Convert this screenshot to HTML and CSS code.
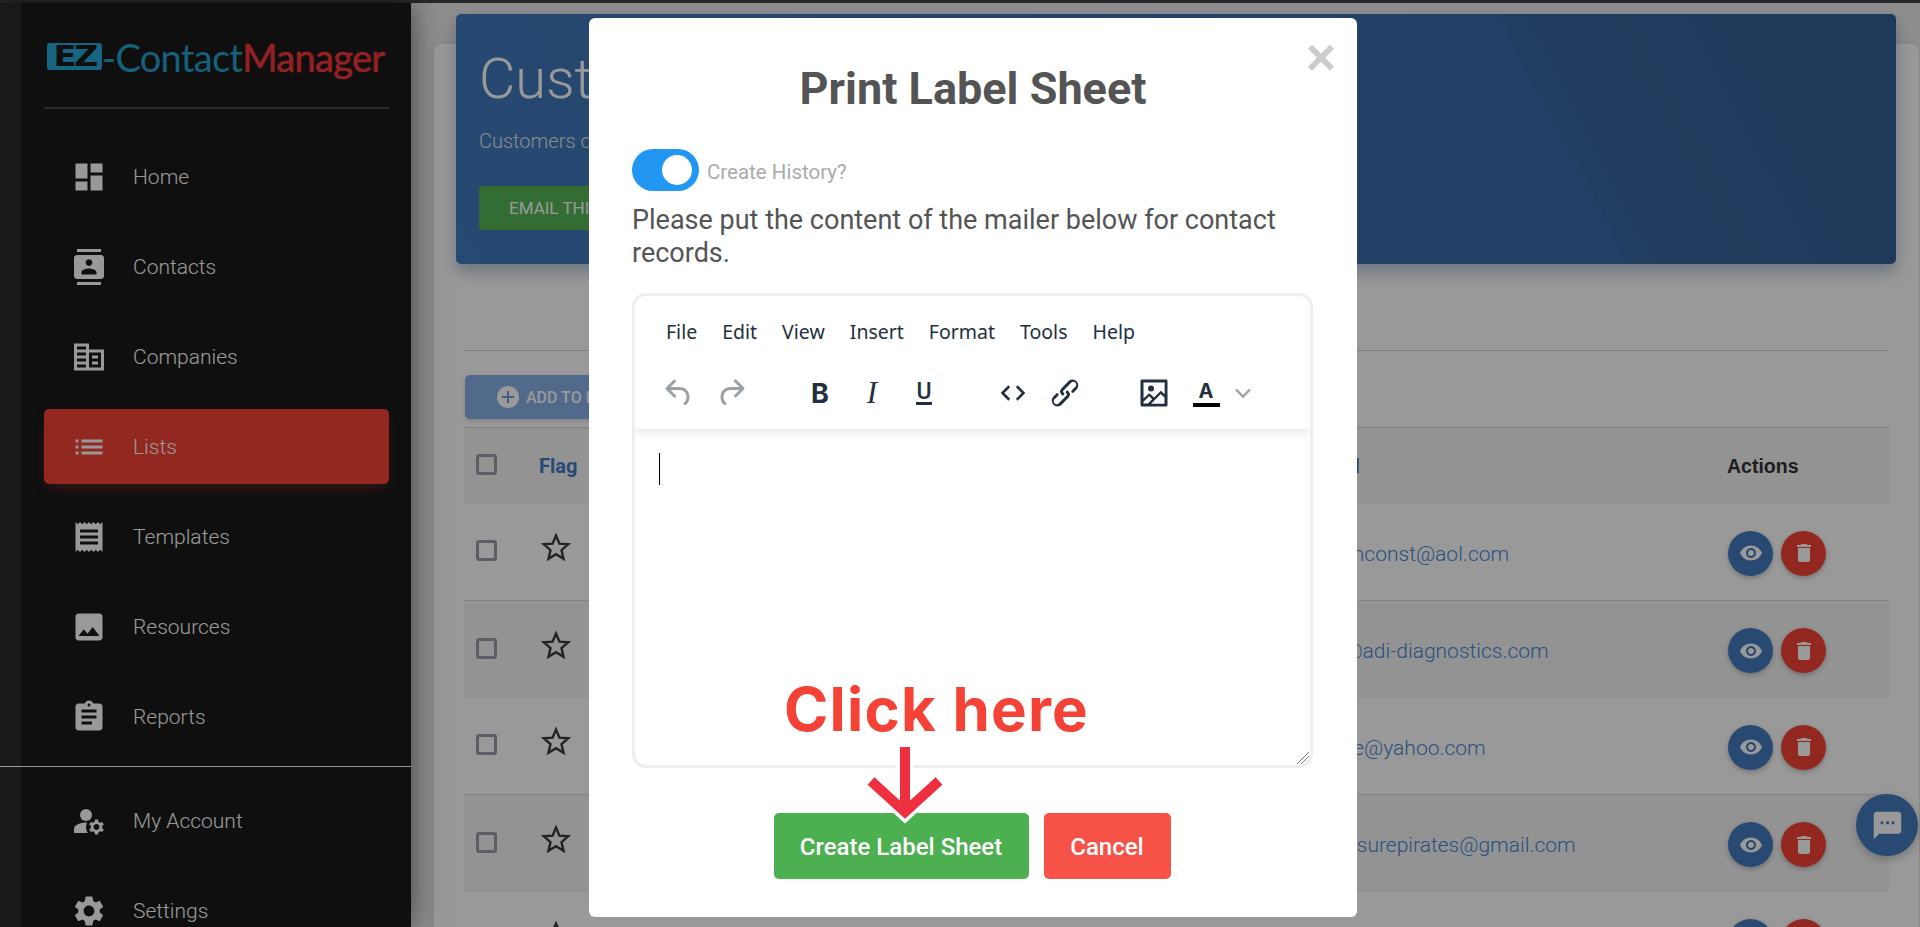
FILE: index.html
```html
<!DOCTYPE html>
<html>
<head>
    <title>EZ-ContactManager</title>
    <link rel="stylesheet" href="styles.css">
</head>
<body>
    <div class="topStrip"></div>
    <div class="layout">
        <aside class="sidebar">
            <div class="logo">
                <span class="logoBox"><span>EZ</span></span><span class="logoContact">-Contact</span><span class="logoManager">Manager</span>
            </div>
            <ul class="nav">
                <li class="navItem"><svg viewBox="0 0 24 24"><path d="M3 13h8V3H3v10zm0 8h8v-6H3v6zm10 0h8V11h-8v10zm0-18v6h8V3h-8z"/></svg>Home</li>
                <li class="navItem"><svg viewBox="0 0 24 24"><path d="M20 0H4v2h16V0zM4 24h16v-2H4v2zM20 4H4c-1.1 0-2 .9-2 2v12c0 1.1.9 2 2 2h16c1.1 0 2-.9 2-2V6c0-1.1-.9-2-2-2zm-8 2.75c1.24 0 2.25 1.01 2.25 2.25s-1.01 2.25-2.25 2.25S9.75 10.24 9.75 9 10.76 6.75 12 6.75zM17 17H7v-1.5c0-1.67 3.33-2.5 5-2.5s5 .83 5 2.5V17z"/></svg>Contacts</li>
                <li class="navItem"><svg viewBox="0 0 24 24"><path d="M12 7V3H2v18h20V7H12zM10 19H4v-2h6v2zm0-4H4v-2h6v2zm0-4H4V9h6v2zm0-4H4V5h6v2zm10 12h-8V9h8v10zm-2-8h-4v2h4v-2zm0 4h-4v2h4v-2z"/></svg>Companies</li>
                <li class="navItem active"><svg viewBox="0 0 24 24"><path d="M3 13h2v-2H3v2zm0 4h2v-2H3v2zm0-8h2V7H3v2zm4 4h14v-2H7v2zm0 4h14v-2H7v2zM7 7v2h14V7H7z"/></svg>Lists</li>
                <li class="navItem"><svg viewBox="0 0 24 24"><path d="M18 17H6v-2h12v2zm0-4H6v-2h12v2zm0-4H6V7h12v2zM3 22l1.5-1.5L6 22l1.5-1.5L9 22l1.5-1.5L12 22l1.5-1.5L15 22l1.5-1.5L18 22l1.5-1.5L21 22V2l-1.5 1.5L18 2l-1.5 1.5L15 2l-1.5 1.5L12 2l-1.5 1.5L9 2 7.5 3.5 6 2 4.5 3.5 3 2v20z"/></svg>Templates</li>
                <li class="navItem"><svg viewBox="0 0 24 24"><path d="M21 19V5c0-1.1-.9-2-2-2H5c-1.1 0-2 .9-2 2v14c0 1.1.9 2 2 2h14c1.1 0 2-.9 2-2zM8.5 13.5l2.5 3.01L14.5 12l4.5 6H5l3.5-4.5z"/></svg>Resources</li>
                <li class="navItem"><svg viewBox="0 0 24 24"><path d="M19 3h-4.18C14.4 1.84 13.3 1 12 1c-1.3 0-2.4.84-2.82 2H5c-1.1 0-2 .9-2 2v14c0 1.1.9 2 2 2h14c1.1 0 2-.9 2-2V5c0-1.1-.9-2-2-2zm-7 0c.55 0 1 .45 1 1s-.45 1-1 1-1-.45-1-1 .45-1 1-1zm2 14H7v-2h7v2zm3-4H7v-2h10v2zm0-4H7V7h10v2z"/></svg>Reports</li>
            </ul>
            <div class="sideLine"></div>
            <ul class="nav navBottom">
                <li class="navItem"><svg viewBox="0 0 24 24"><circle cx="10" cy="8" r="4"/><path d="M10.67 13.02C10.45 13.01 10.23 13 10 13c-2.42 0-4.68.67-6.61 1.82-.88.52-1.39 1.5-1.39 2.53V20h9.26c-.79-1.13-1.26-2.51-1.26-4 0-1.07.25-2.07.67-2.98z"/><path d="M20.75 16c0-.22-.03-.42-.06-.63l1.14-1.01-1-1.73-1.45.49c-.32-.27-.68-.48-1.08-.63L18 11h-2l-.3 1.49c-.4.15-.76.36-1.08.63l-1.45-.49-1 1.73 1.14 1.01c-.03.21-.06.41-.06.63s.03.42.06.63l-1.14 1.01 1 1.73 1.45-.49c.32.27.68.48 1.08.63L16 21h2l.3-1.49c.4-.15.76-.36 1.08-.63l1.45.49 1-1.73-1.14-1.01c.03-.21.06-.41.06-.63zM17 18c-1.1 0-2-.9-2-2s.9-2 2-2 2 .9 2 2-.9 2-2 2z"/></svg>My Account</li>
                <li class="navItem"><svg viewBox="0 0 24 24"><path d="M19.14 12.94c.04-.3.06-.61.06-.94 0-.32-.02-.64-.07-.94l2.03-1.58c.18-.14.23-.41.12-.61l-1.92-3.32c-.12-.22-.37-.29-.59-.22l-2.39.96c-.5-.38-1.03-.7-1.62-.94l-.36-2.54c-.04-.24-.24-.41-.48-.41h-3.84c-.24 0-.43.17-.47.41l-.36 2.54c-.59.24-1.13.57-1.62.94l-2.39-.96c-.22-.08-.47 0-.59.22L2.74 8.87c-.12.21-.08.47.12.61l2.03 1.58c-.05.3-.09.63-.09.94s.02.64.07.94l-2.03 1.58c-.18.14-.23.41-.12.61l1.92 3.32c.12.22.37.29.59.22l2.39-.96c.5.38 1.03.7 1.62.94l.36 2.54c.05.24.24.41.48.41h3.84c.24 0 .44-.17.47-.41l.36-2.54c.59-.24 1.13-.56 1.62-.94l2.39.96c.22.08.47 0 .59-.22l1.92-3.32c.12-.22.07-.47-.12-.61l-2.01-1.58zM12 15.6c-1.98 0-3.6-1.62-3.6-3.6s1.62-3.6 3.6-3.6 3.6 1.62 3.6 3.6-1.62 3.6-3.6 3.6z"/></svg>Settings</li>
            </ul>
        </aside>

        <main class="main">
            <section class="card">
                <div class="hero">
                    <h1>Customers</h1>
                    <p>Customers on this list</p>
                    <div class="emailBtn">EMAIL THIS LIST</div>
                </div>
                <div class="cardBody">
                    <div class="tabs"></div>
                    <div class="addBtn">
                        <svg viewBox="0 0 22 22"><circle cx="11" cy="11" r="11" fill="#fff"/><path d="M10 5h2v5h5v2h-5v5h-2v-5H5v-2h5z" fill="#6d9bd8"/></svg>
                        ADD TO LIST
                    </div>
                    <div class="table">
                        <div class="row head">
                            <span class="check"></span>
                            <span class="flagHead">Flag</span>
                            <span class="emailHead">Email</span>
                            <span class="actionsHead">Actions</span>
                        </div>
                        <div class="row">
                            <span class="check"></span>
                            <svg class="star" viewBox="0 0 32 32"><path d="M16 4.5l3.4 8.1 8.8.7-6.7 5.8 2 8.6L16 23.2l-7.5 4.5 2-8.6-6.7-5.8 8.8-.7z"/></svg>
                            <span class="email">hilenconst@aol.com</span>
                            <div class="actions">
                                <span class="round view"><svg viewBox="0 0 24 24"><path d="M12 4.5C7 4.5 2.73 7.61 1 12c1.73 4.39 6 7.5 11 7.5s9.27-3.11 11-7.5c-1.73-4.39-6-7.5-11-7.5zM12 17c-2.76 0-5-2.24-5-5s2.24-5 5-5 5 2.24 5 5-2.24 5-5 5zm0-8c-1.66 0-3 1.34-3 3s1.34 3 3 3 3-1.34 3-3-1.34-3-3-3z"/></svg></span>
                                <span class="round remove"><svg viewBox="0 0 24 24"><path d="M6 19c0 1.1.9 2 2 2h8c1.1 0 2-.9 2-2V7H6v12zM19 4h-3.5l-1-1h-5l-1 1H5v2h14V4z"/></svg></span>
                            </div>
                        </div>
                        <div class="row">
                            <span class="check"></span>
                            <svg class="star" viewBox="0 0 32 32"><path d="M16 4.5l3.4 8.1 8.8.7-6.7 5.8 2 8.6L16 23.2l-7.5 4.5 2-8.6-6.7-5.8 8.8-.7z"/></svg>
                            <span class="email">so@adi-diagnostics.com</span>
                            <div class="actions">
                                <span class="round view"><svg viewBox="0 0 24 24"><path d="M12 4.5C7 4.5 2.73 7.61 1 12c1.73 4.39 6 7.5 11 7.5s9.27-3.11 11-7.5c-1.73-4.39-6-7.5-11-7.5zM12 17c-2.76 0-5-2.24-5-5s2.24-5 5-5 5 2.24 5 5-2.24 5-5 5zm0-8c-1.66 0-3 1.34-3 3s1.34 3 3 3 3-1.34 3-3-1.34-3-3-3z"/></svg></span>
                                <span class="round remove"><svg viewBox="0 0 24 24"><path d="M6 19c0 1.1.9 2 2 2h8c1.1 0 2-.9 2-2V7H6v12zM19 4h-3.5l-1-1h-5l-1 1H5v2h14V4z"/></svg></span>
                            </div>
                        </div>
                        <div class="row">
                            <span class="check"></span>
                            <svg class="star" viewBox="0 0 32 32"><path d="M16 4.5l3.4 8.1 8.8.7-6.7 5.8 2 8.6L16 23.2l-7.5 4.5 2-8.6-6.7-5.8 8.8-.7z"/></svg>
                            <span class="email">liane@yahoo.com</span>
                            <div class="actions">
                                <span class="round view"><svg viewBox="0 0 24 24"><path d="M12 4.5C7 4.5 2.73 7.61 1 12c1.73 4.39 6 7.5 11 7.5s9.27-3.11 11-7.5c-1.73-4.39-6-7.5-11-7.5zM12 17c-2.76 0-5-2.24-5-5s2.24-5 5-5 5 2.24 5 5-2.24 5-5 5zm0-8c-1.66 0-3 1.34-3 3s1.34 3 3 3 3-1.34 3-3-1.34-3-3-3z"/></svg></span>
                                <span class="round remove"><svg viewBox="0 0 24 24"><path d="M6 19c0 1.1.9 2 2 2h8c1.1 0 2-.9 2-2V7H6v12zM19 4h-3.5l-1-1h-5l-1 1H5v2h14V4z"/></svg></span>
                            </div>
                        </div>
                        <div class="row">
                            <span class="check"></span>
                            <svg class="star" viewBox="0 0 32 32"><path d="M16 4.5l3.4 8.1 8.8.7-6.7 5.8 2 8.6L16 23.2l-7.5 4.5 2-8.6-6.7-5.8 8.8-.7z"/></svg>
                            <span class="email">treasurepirates@gmail.com</span>
                            <div class="actions">
                                <span class="round view"><svg viewBox="0 0 24 24"><path d="M12 4.5C7 4.5 2.73 7.61 1 12c1.73 4.39 6 7.5 11 7.5s9.27-3.11 11-7.5c-1.73-4.39-6-7.5-11-7.5zM12 17c-2.76 0-5-2.24-5-5s2.24-5 5-5 5 2.24 5 5-2.24 5-5 5zm0-8c-1.66 0-3 1.34-3 3s1.34 3 3 3 3-1.34 3-3-1.34-3-3-3z"/></svg></span>
                                <span class="round remove"><svg viewBox="0 0 24 24"><path d="M6 19c0 1.1.9 2 2 2h8c1.1 0 2-.9 2-2V7H6v12zM19 4h-3.5l-1-1h-5l-1 1H5v2h14V4z"/></svg></span>
                            </div>
                        </div>
                        <div class="row">
                            <span class="check"></span>
                            <svg class="star" viewBox="0 0 32 32"><path d="M16 4.5l3.4 8.1 8.8.7-6.7 5.8 2 8.6L16 23.2l-7.5 4.5 2-8.6-6.7-5.8 8.8-.7z"/></svg>
                            <span class="email"></span>
                            <div class="actions">
                                <span class="round view"></span>
                                <span class="round remove"></span>
                            </div>
                        </div>
                    </div>
                </div>
            </section>
        </main>
    </div>

    <div class="chat"><svg viewBox="0 0 24 24"><path d="M20 2H4c-1.1 0-1.99.9-1.99 2L2 22l4-4h14c1.1 0 2-.9 2-2V4c0-1.1-.9-2-2-2zM9 11H7V9h2v2zm4 0h-2V9h2v2zm4 0h-2V9h2v2z"/></svg></div>

    <div class="overlay">
        <div class="modal">
            <span class="close">×</span>
            <h2>Print Label Sheet</h2>
            <div class="historyRow">
                <span class="toggle"><span class="knob"></span></span>
                <span class="historyLabel">Create History?</span>
            </div>
            <p class="intro">Please put the content of the mailer below for contact records.</p>

            <div class="editor">
                <div class="editorHead">
                    <div class="menubar">
                        <span>File</span><span>Edit</span><span>View</span><span>Insert</span><span>Format</span><span>Tools</span><span>Help</span>
                    </div>
                    <div class="toolbar">
                        <div class="toolGroup">
                            <span class="tool off"><svg viewBox="0 0 24 24"><path d="M6.4 8H12c3.7 0 6.2 2 6.8 5.1.6 2.7-.4 5.6-2.3 6.8a1 1 0 0 1-1-1.8c1.1-.6 1.8-2.7 1.4-4.6-.5-2.1-2.1-3.5-4.9-3.5H6.4l3.3 3.3a1 1 0 1 1-1.4 1.4l-5-5a1 1 0 0 1 0-1.4l5-5a1 1 0 0 1 1.4 1.4L6.4 8z"/></svg></span>
                            <span class="tool off"><svg viewBox="0 0 24 24"><path d="M17.6 10H12c-2.8 0-4.4 1.4-4.9 3.5-.4 2 .3 4 1.4 4.6a1 1 0 1 1-1 1.8c-1.9-1.2-2.9-4.1-2.3-6.8.6-3 3-5.1 6.8-5.1h5.6l-3.3-3.3a1 1 0 1 1 1.4-1.4l5 5a1 1 0 0 1 0 1.4l-5 5a1 1 0 0 1-1.4-1.4l3.3-3.3z"/></svg></span>
                        </div>
                        <div class="toolGroup">
                            <span class="tool boldTool">B</span>
                            <span class="tool italicTool">I</span>
                            <span class="tool underTool"><span>U</span></span>
                        </div>
                        <div class="toolGroup">
                            <span class="tool"><svg viewBox="0 0 24 24"><path d="M9.5 7.5L5 12l4.5 4.5M14.5 7.5L19 12l-4.5 4.5" fill="none" stroke="currentColor" stroke-width="1.7"/></svg></span>
                            <span class="tool"><svg viewBox="0 0 24 24"><path d="M6.2 12.3a1 1 0 0 1 1.4 1.4l-2 2a2 2 0 1 0 2.6 2.8l4.8-4.8a1 1 0 0 0 0-1.4 1 1 0 1 1 1.4-1.3 2.9 2.9 0 0 1 0 4L9.6 20a3.9 3.9 0 0 1-5.5-5.5l2-2zm11.6-.6a1 1 0 0 1-1.4-1.4l2-2a2 2 0 1 0-2.6-2.8L11 10.3a1 1 0 0 0 0 1.4A1 1 0 1 1 9.6 13a2.9 2.9 0 0 1 0-4L14.4 4a3.9 3.9 0 0 1 5.5 5.5l-2 2z"/></svg></span>
                        </div>
                        <div class="toolGroup">
                            <span class="tool"><svg viewBox="0 0 24 24"><path d="M5 15.7l3.3-3.2c.3-.3.7-.3 1 0L12 15l4.1-4c.3-.4.8-.4 1 0l2 1.9V5H5v10.7zM5 18V19h3l2.8-2.9-2-2L5 17.9zm14-3l-2.5-2.4-6.4 6.5H19v-4zM4 3h16c.6 0 1 .4 1 1v16c0 .6-.4 1-1 1H4a1 1 0 0 1-1-1V4c0-.6.4-1 1-1zm6 8a2 2 0 1 0 0-4 2 2 0 0 0 0 4z"/></svg></span>
                            <span class="tool colorTool"><span>A</span></span>
                            <span class="tool chevron"><svg viewBox="0 0 24 24"><path d="M6 9l6 6 6-6" fill="none" stroke="currentColor" stroke-width="2"/></svg></span>
                        </div>
                    </div>
                </div>
                <div class="editorBody">
                    <div class="caret"></div>
                    <svg class="grip" viewBox="0 0 16 16"><path d="M15 3L3 15M15 7L7 15M15 11L11 15" stroke="#777" fill="none"/></svg>
                </div>
            </div>

            <div class="modalBtns">
                <div class="btn create">Create Label Sheet</div>
                <div class="btn cancel">Cancel</div>
            </div>

            <div class="hint">Click here</div>
            <svg class="hintArrow" viewBox="0 0 90 90">
                <path d="M45 1V62M11 35L45 66L79 35" fill="none" stroke="#fff" stroke-width="17"/>
                <path d="M45 1V62M11 35L45 66L79 35" fill="none" stroke="#ee2f3f" stroke-width="10"/>
            </svg>
        </div>
    </div>
</body>
</html>
```

FILE: styles.css
```css
*{
    box-sizing: border-box;
}
html,body{
    height: 100%;
}
body{
    margin: 0;
    overflow: hidden;
    background-color: #ececec;
    font-family: Roboto, "Liberation Sans", sans-serif;
}
ul{
    list-style: none;
    margin: 0;
    padding: 0;
}
.topStrip{
    height: 3px;
    background-color: #41414a;
}
.layout{
    display: flex;
    height: 924px;
}
/*=======Sidebar=======*/
.sidebar{
    position: relative;
    z-index: 1;
    flex: none;
    width: 411px;
    padding-left: 21px;
    background: linear-gradient(90deg, #2b2b2b 21px, #191919 21px);
    box-shadow: 0 0 28px rgba(0,0,0,.55);
    overflow: hidden;
}
.logo{
    display: flex;
    align-items: center;
    height: 106px;
    margin: 0 22px 0 23px;
    padding: 3px 0 0 3px;
    border-bottom: 2px solid #4a4a50;
    font-family: Lato, sans-serif;
    font-size: 38px;
    letter-spacing: -.7px;
    white-space: nowrap;
}
.logoBox{
    display: block;
    flex: none;
    width: 55px;
    height: 27px;
    border-radius: 3px;
    background-color: #27a9d8;
    color: #191919;
    font-family: "DejaVu Sans", sans-serif;
    font-size: 28px;
    font-weight: 700;
    line-height: 27px;
    letter-spacing: -2px;
    text-align: center;
}
.logoBox span{
    display: inline-block;
    transform: scaleX(1.2);
}
.logoContact{
    color: #22a2cf;
}
.logoManager{
    color: #f4373d;
    -webkit-text-stroke: .6px #f4373d;
}
.nav{
    display: flex;
    flex-direction: column;
    gap: 15px;
    margin: 0 22px 0 23px;
    padding-top: 30px;
}
.navItem{
    display: flex;
    align-items: center;
    gap: 26px;
    height: 75px;
    padding-left: 27px;
    border-radius: 5px;
    color: #fff;
    font-size: 21px;
    font-weight: 300;
}
.navItem svg{
    width: 36px;
    height: 36px;
    fill: #fff;
    flex: none;
}
.navItem.active{
    background-color: #f44336;
    box-shadow: 0 6px 14px -4px rgba(244,67,54,.4);
}
.sideLine{
    height: 1px;
    margin: 12px 0 0 -21px;
    background-color: #fff;
}
.navBottom{
    padding-top: 16px;
}
/*=======Main=======*/
.main{
    flex: 1;
    min-width: 0;
    padding: 41px 1px 0 23px;
}
.card{
    height: 900px;
    border-radius: 8px;
    background-color: #fff;
    box-shadow: 0 1px 12px rgba(0,0,0,.08);
}
.hero{
    height: 250px;
    margin: 0 23px 0 22px;
    position: relative;
    top: -30px;
    padding: 33px 23px;
    border-radius: 5px;
    background: linear-gradient(62.5deg, #417bbe, #3b6dac 65%, #3a6aa8 74.7%, #38669f 74.7%, #35629a 88.4%, #336096 88.4%);
    box-shadow: 0 8px 16px rgba(40,80,130,.35);
    color: #fff;
}
.hero h1{
    margin: 0;
    font-size: 56px;
    font-weight: 300;
    line-height: 64px;
}
.hero p{
    margin: 18px 0 0;
    font-size: 20px;
    font-weight: 300;
    color: #e2e8ef;
}
.emailBtn{
    display: inline-block;
    margin-top: 33px;
    padding: 0 30px;
    height: 44px;
    line-height: 44px;
    border-radius: 4px;
    background-color: #55b655;
    font-size: 17px;
}
.cardBody{
    margin-top: -30px;
    padding: 0 30px;
}
.tabs{
    height: 87px;
    border-bottom: 1px solid #d0d0d0;
}
.addBtn{
    display: flex;
    align-items: center;
    gap: 7px;
    width: 230px;
    height: 44px;
    margin: 24px 0 8px 1px;
    padding-left: 32px;
    border-radius: 5px;
    background-color: #87b1e8;
    color: #fff;
    font-size: 16px;
    font-weight: 500;
    box-shadow: 0 2px 5px rgba(0,0,0,.15);
}
.addBtn svg{
    width: 22px;
    height: 22px;
}
/*=======Table=======*/
.table{
    border-top: 1px solid #d6d6d6;
}
.row{
    display: grid;
    grid-template-columns: 75px 782px 406px 1fr;
    align-items: center;
    height: 97px;
    color: #2a2a2a;
}
.row.head{
    height: 76px;
    background-color: #f3f3f3;
}
.row:nth-child(even){
    border-bottom: 1px solid #ddd;
}
.row:nth-child(odd){
    background-color: #f5f5f5;
}
.check{
    width: 21px;
    height: 21px;
    margin: 0 0 3px 12px;
    border: 3px solid #9c9caa;
    border-radius: 3px;
}
.flagHead,.emailHead{
    color: #417bc8;
    font-size: 20px;
    font-weight: 700;
}
.emailHead{
    justify-self: start;
    margin-left: -11px;
}
.actionsHead{
    font-family: "Liberation Sans", sans-serif;
    font-size: 19.5px;
    font-weight: 700;
    color: #333;
}
.star{
    width: 32px;
    height: 32px;
    margin: 0 0 10px 1px;
    fill: none;
    stroke: #3a3a3a;
    stroke-width: 2.4;
}
.email{
    margin-top: 3px;
    color: #4885d5;
    font-size: 21px;
    font-weight: 300;
}
.actions{
    display: flex;
    gap: 8px;
    margin-top: 2px;
    padding-left: 1px;
}
.round{
    display: flex;
    justify-content: center;
    align-items: center;
    width: 45px;
    height: 45px;
    border-radius: 50%;
    box-shadow: 0 2px 5px rgba(0,0,0,.25);
}
.round svg{
    width: 24px;
    height: 24px;
    fill: #fff;
}
.round.view{
    background-color: #417bbe;
}
.round.remove{
    background-color: #f44336;
}
.chat{
    position: fixed;
    right: 2px;
    bottom: 71px;
    z-index: 2;
    display: flex;
    justify-content: center;
    align-items: center;
    width: 62px;
    height: 62px;
    border-radius: 50%;
    background-color: #417bbe;
    box-shadow: 0 3px 8px rgba(0,0,0,.25);
}
.chat svg{
    width: 33px;
    height: 33px;
    fill: #fff;
}
/*=======Modal=======*/
.overlay{
    position: fixed;
    top: 0;
    left: 0;
    right: 0;
    bottom: 0;
    z-index: 5;
    display: flex;
    justify-content: center;
    align-items: flex-start;
    padding: 18px 0 0 26px;
    background-color: rgba(0,0,0,.4);
}
.modal{
    position: relative;
    width: 768px;
    height: 899px;
    padding: 46px 43px 0;
    border-radius: 6px;
    background-color: #fff;
    color: #545454;
}
.close{
    position: absolute;
    top: 4px;
    right: 21px;
    color: #ccc;
    font-family: "Liberation Sans", sans-serif;
    font-size: 52px;
    font-weight: 700;
    line-height: 70px;
}
.modal h2{
    margin: 1px 0 -1px;
    color: #545454;
    font-size: 45px;
    font-weight: 700;
    line-height: 48px;
    text-align: center;
}
.historyRow{
    display: flex;
    align-items: center;
    gap: 8px;
    margin-top: 37px;
}
.toggle{
    display: block;
    position: relative;
    width: 67px;
    height: 42px;
    border-radius: 21px;
    background-color: #2196f3;
}
.knob{
    position: absolute;
    top: 6px;
    right: 7px;
    width: 30px;
    height: 30px;
    border-radius: 50%;
    background-color: #fff;
}
.historyLabel{
    padding-top: 3px;
    color: #aaa;
    font-size: 20.5px;
    font-weight: 400;
}
.intro{
    margin: 13px 0 23px;
    font-size: 27px;
    line-height: 33px;
    width: 670px;
}
/*=======Editor=======*/
.editor{
    display: flex;
    flex-direction: column;
    width: 681px;
    height: 475px;
    border: 3px solid #eee;
    border-radius: 14px;
    overflow: hidden;
}
.editorHead{
    position: relative;
    height: 133px;
    box-shadow: 0 3px 8px rgba(0,0,0,.1);
}
.menubar{
    display: flex;
    align-items: center;
    gap: 25px;
    height: 70px;
    padding-left: 31px;
    color: #222f3e;
    font-family: "Noto Sans", sans-serif;
    font-size: 19.5px;
}
.toolbar{
    display: flex;
    gap: 53px;
    height: 63px;
    padding: 9px 0 0 26px;
}
.toolGroup{
    display: flex;
    gap: 16px;
}
.tool{
    display: flex;
    justify-content: center;
    align-items: center;
    width: 36px;
    height: 36px;
    color: #222f3e;
}
.tool svg{
    width: 36px;
    height: 36px;
    fill: currentColor;
}
.tool.off{
    color: #9aa0a6;
}
.boldTool{
    font-family: Inter, sans-serif;
    font-size: 27px;
    font-weight: 700;
}
.italicTool{
    font-family: "Liberation Serif", serif;
    font-size: 31px;
    font-style: italic;
}
.underTool span{
    display: block;
    border-bottom: 3px solid #222f3e;
    border-radius: 1px;
    font-size: 23px;
    font-weight: 500;
    line-height: 21px;
}
.colorTool span{
    display: block;
    width: 27px;
    border-bottom: 4px solid #000;
    font-family: Inter, sans-serif;
    font-size: 20px;
    font-weight: 700;
    line-height: 24px;
    text-align: center;
}
.tool.chevron{
    margin-left: -15px;
    color: #9aa0a6;
}
.tool.chevron svg{
    width: 28px;
    height: 28px;
}
.editorBody{
    position: relative;
    flex: 1;
}
.caret{
    width: 1px;
    height: 32px;
    margin: 24px 0 0 24px;
    background-color: #000;
}
.grip{
    position: absolute;
    right: 0;
    bottom: 0;
    width: 16px;
    height: 16px;
}
.modalBtns{
    display: flex;
    justify-content: center;
    gap: 15px;
    margin: 45px 0 0 -2px;
}
.btn{
    display: flex;
    justify-content: center;
    align-items: center;
    height: 66px;
    padding-top: 1px;
    border-radius: 5px;
    color: #fff;
    font-size: 24px;
    font-weight: 500;
}
.btn.create{
    width: 255px;
    background-color: #4caf50;
}
.btn.cancel{
    width: 127px;
    background-color: #f65247;
}
/* red note drawn over the screenshot */
.hint{
    position: absolute;
    top: 656px;
    left: 195px;
    color: #f44336;
    font-family: Inter, sans-serif;
    font-size: 60px;
    font-weight: 700;
    line-height: 70px;
    letter-spacing: 1.2px;
    white-space: nowrap;
}
.hintArrow{
    position: absolute;
    top: 728px;
    left: 271px;
    width: 90px;
    height: 90px;
}
```
